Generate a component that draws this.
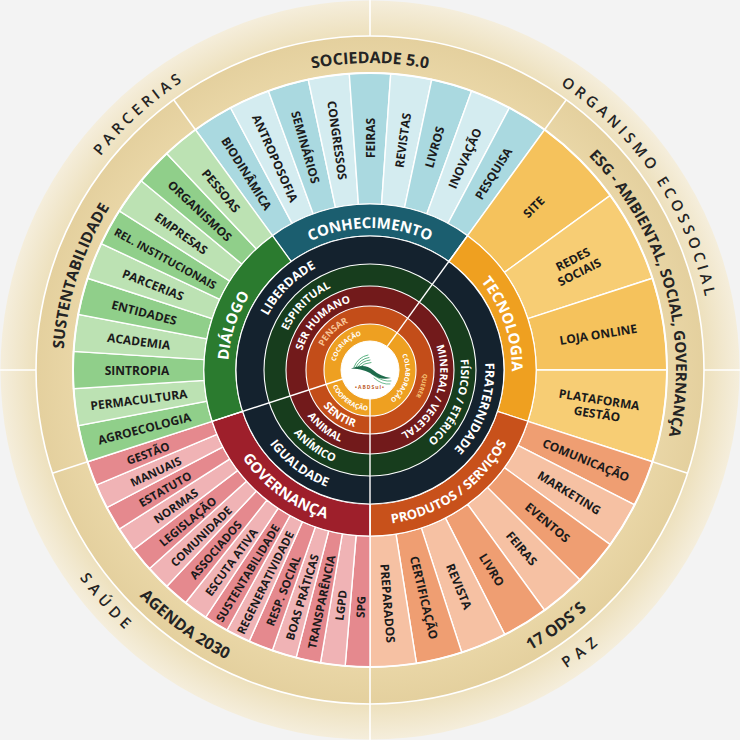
import React from "react";

const CX = 370;
const CY = 370;
const FONT = "'Open Sans', 'Liberation Sans', sans-serif";
const rad = (d: number) => (d * Math.PI) / 180;
const pt = (r: number, a: number): [number, number] => [CX + r * Math.cos(rad(a)), CY + r * Math.sin(rad(a))];
const f = (n: number) => n.toFixed(2);

function sector(r1: number, r2: number, a1: number, a2: number) {
  const large = a2 - a1 > 180 ? 1 : 0;
  const [x1, y1] = pt(r2, a1);
  const [x2, y2] = pt(r2, a2);
  const [x3, y3] = pt(r1, a2);
  const [x4, y4] = pt(r1, a1);
  return `M ${f(x1)} ${f(y1)} A ${r2} ${r2} 0 ${large} 1 ${f(x2)} ${f(y2)} L ${f(x3)} ${f(y3)} A ${r1} ${r1} 0 ${large} 0 ${f(x4)} ${f(y4)} Z`;
}

function arcPath(r: number, center: number, cw: boolean, half = 85) {
  const a1 = center - half;
  const a2 = center + half;
  if (cw) {
    const [x1, y1] = pt(r, a1);
    const [x2, y2] = pt(r, a2);
    return `M ${f(x1)} ${f(y1)} A ${r} ${r} 0 0 1 ${f(x2)} ${f(y2)}`;
  }
  const [x1, y1] = pt(r, a2);
  const [x2, y2] = pt(r, a1);
  return `M ${f(x1)} ${f(y1)} A ${r} ${r} 0 0 0 ${f(x2)} ${f(y2)}`;
}

type ArcProps = {
  id: string;
  r: number;
  center: number;
  cw: boolean;
  text: string;
  size: number;
  fill?: string;
  ls?: number;
  weight?: number;
  half?: number;
};

function ArcText({ id, r, center, cw, text, size, fill = "#ffffff", ls = 0, weight = 700, half = 85 }: ArcProps) {
  return (
    <g>
      <path id={id} d={arcPath(r, center, cw, half)} fill="none" />
      <text fontSize={size} fill={fill} fontWeight={weight} letterSpacing={ls} fontFamily={FONT}>
        <textPath href={`#${id}`} startOffset="50%" textAnchor="middle">
          {text}
        </textPath>
      </text>
    </g>
  );
}

function SegLabel({ r, a, label, size }: { r: number; a: number; label: string | string[]; size: number }) {
  let n = ((a % 360) + 360) % 360;
  if (n > 180) n -= 360;
  const rot = n >= -90 && n <= 90 ? n : n + 180;
  const [x, y] = pt(r, a);
  const lines = Array.isArray(label) ? label : [label];
  const lh = size * 1.2;
  return (
    <text
      transform={`translate(${f(x)} ${f(y)}) rotate(${f(rot)})`}
      fontSize={size}
      fontWeight={700}
      fill="#1b1b1b"
      textAnchor="middle"
      dominantBaseline="central"
      fontFamily={FONT}
    >
      {lines.map((l, i) => (
        <tspan key={i} x={0} y={f((i - (lines.length - 1) / 2) * lh)}>
          {l}
        </tspan>
      ))}
    </text>
  );
}

type Seg = { t: string | string[]; s?: number };
type Group = { start: number; end: number; colors: [string, string]; tr: number; size: number; segs: Seg[] };

const groups: Group[] = [
  {
    start: 234,
    end: 306,
    colors: ["#aad9e0", "#d4ecf0"],
    tr: 232,
    size: 12,
    segs: [
      { t: "BIODINÂMICA" },
      { t: "ANTROPOSOFIA" },
      { t: "SEMINÁRIOS" },
      { t: "CONGRESSOS" },
      { t: "FEIRAS" },
      { t: "REVISTAS" },
      { t: "LIVROS" },
      { t: "INOVAÇÃO" },
      { t: "PESQUISA" },
    ],
  },
  {
    start: 306,
    end: 378,
    colors: ["#f5c25c", "#f7cd74"],
    tr: 231,
    size: 12,
    segs: [{ t: "SITE" }, { t: ["REDES", "SOCIAIS"] }, { t: "LOJA ONLINE" }, { t: ["PLATAFORMA", "GESTÃO"] }],
  },
  {
    start: 18,
    end: 90,
    colors: ["#ef9e72", "#f6c1a3"],
    tr: 234,
    size: 12,
    segs: [
      { t: "COMUNICAÇÃO" },
      { t: "MARKETING" },
      { t: "EVENTOS" },
      { t: "FEIRAS" },
      { t: "LIVRO" },
      { t: "REVISTA" },
      { t: "CERTIFICAÇÃO" },
      { t: "PREPARADOS" },
    ],
  },
  {
    start: 90,
    end: 162,
    colors: ["#e5898e", "#f0b3b5"],
    tr: 237,
    size: 11.5,
    segs: [
      { t: "SPG" },
      { t: "LGPD" },
      { t: "TRANSPARÊNCIA" },
      { t: "BOAS PRÁTICAS" },
      { t: "RESP. SOCIAL" },
      { t: "REGENERATIVIDADE" },
      { t: "SUSTENTABILIDADE" },
      { t: "ESCUTA ATIVA" },
      { t: "ASSOCIADOS" },
      { t: "COMUNIDADE" },
      { t: "LEGISLAÇÃO" },
      { t: "NORMAS" },
      { t: "ESTATUTO" },
      { t: "MANUAIS" },
      { t: "GESTÃO" },
    ],
  },
  {
    start: 162,
    end: 234,
    colors: ["#90cf8a", "#bce2b3"],
    tr: 233,
    size: 12,
    segs: [
      { t: "AGROECOLOGIA" },
      { t: "PERMACULTURA" },
      { t: "SINTROPIA" },
      { t: "ACADEMIA" },
      { t: "ENTIDADES" },
      { t: "PARCERIAS" },
      { t: "REL. INSTITUCIONAIS", s: 11 },
      { t: "EMPRESAS" },
      { t: "ORGANISMOS" },
      { t: "PESSOAS" },
    ],
  },
];

const categories = [
  { start: 234, end: 306, color: "#1b5e6f" },
  { start: 306, end: 378, color: "#efa020" },
  { start: 18, end: 90, color: "#c8511b" },
  { start: 90, end: 162, color: "#9e1f2b" },
  { start: 162, end: 234, color: "#2b7b2f" },
];

const rings = [
  { r: 134, c: "#14222e" },
  { r: 106, c: "#173d1d" },
  { r: 84, c: "#721a1b" },
  { r: 64, c: "#c34d19" },
  { r: 46, c: "#eea021" },
];

export default function App() {
  let idc = 0;
  const nid = () => `tp${idc++}`;

  const segPaths: React.ReactNode[] = [];
  const segLabels: React.ReactNode[] = [];
  groups.forEach((g, gi) => {
    const step = (g.end - g.start) / g.segs.length;
    g.segs.forEach((s, i) => {
      const a1 = g.start + i * step;
      const a2 = a1 + step;
      segPaths.push(
        <path key={`s${gi}-${i}`} d={sector(166, 297, a1, a2)} fill={g.colors[i % 2]} stroke="#ffffff" strokeWidth={1.4} />
      );
      segLabels.push(<SegLabel key={`l${gi}-${i}`} r={g.tr} a={(a1 + a2) / 2} label={s.t} size={s.s ?? g.size} />);
    });
  });

  const dark = "#242424";

  return (
    <div className="w-[740px] h-[740px] bg-[#f3f3f3] overflow-hidden">
      <svg width={740} height={740} viewBox="0 0 740 740" className="block">
        <defs>
          <radialGradient id="outerGrad" gradientUnits="userSpaceOnUse" cx={370} cy={370} r={370}>
            <stop offset="0.9" stopColor="#ede0bc" />
            <stop offset="1" stopColor="#f5eedc" />
          </radialGradient>
          <radialGradient id="midGrad" gradientUnits="userSpaceOnUse" cx={370} cy={370} r={334}>
            <stop offset="0.89" stopColor="#e9d6a6" />
            <stop offset="1" stopColor="#e4d09e" />
          </radialGradient>
        </defs>

        <circle cx={CX} cy={CY} r={369.5} fill="url(#outerGrad)" />
        <circle cx={CX} cy={CY} r={334} fill="url(#midGrad)" stroke="#ffffff" strokeWidth={1.6} />

        {[0, 90, 180, 270].map((a) => {
          const [x1, y1] = pt(334, a);
          const [x2, y2] = pt(370, a);
          return <line key={`od${a}`} x1={x1} y1={y1} x2={x2} y2={y2} stroke="#ffffff" strokeWidth={1.6} />;
        })}
        {[18, 90, 162, 234, 306].map((a) => {
          const [x1, y1] = pt(297, a);
          const [x2, y2] = pt(334, a);
          return <line key={`md${a}`} x1={x1} y1={y1} x2={x2} y2={y2} stroke="#ffffff" strokeWidth={1.6} />;
        })}

        {segPaths}
        <circle cx={CX} cy={CY} r={297} fill="none" stroke="#ffffff" strokeWidth={2} />

        {categories.map((c, i) => (
          <path key={`c${i}`} d={sector(134, 166, c.start, c.end)} fill={c.color} stroke="#ffffff" strokeWidth={1.2} />
        ))}

        {rings.map((r, i) => (
          <circle key={`r${i}`} cx={CX} cy={CY} r={r.r} fill={r.c} stroke="#ffffff" strokeWidth={1.1} />
        ))}
        <circle cx={CX} cy={CY} r={29} fill="#ffffff" stroke="#ffffff" strokeWidth={1} />

        {[306, 90, 162].map((a) => {
          const [x1, y1] = pt(29, a);
          const [x2, y2] = pt(166, a);
          return <line key={`id${a}`} x1={x1} y1={y1} x2={x2} y2={y2} stroke="#ffffff" strokeWidth={1.4} />;
        })}

        {/* Logo */}
        <g transform="translate(370 370)">
          <g fill="none" stroke="#47a874" strokeWidth={0.9} strokeLinecap="round">
            <path d="M -16 -3 Q -12 -13 -2 -15" />
            <path d="M -14 -3 Q -10 -11 -1 -12.5" />
            <path d="M -12 -3 Q -8 -9 0 -10" />
            <path d="M -10 -3 Q -6 -7 1 -7.5" />
          </g>
          <path
            d="M -19 -1.5 C -10 -5 -3 -5 3 0 C 8 4.5 14 7 21 8 C 14 9.5 7 8.5 2 4.5 C -3 0.5 -10 -1 -19 -1.5 Z"
            fill="#1e6b4b"
          />
          <g fill="none" stroke="#47a874" strokeWidth={0.8} strokeLinecap="round">
            <path d="M 5 6 Q 13 12 21 11" />
            <path d="M 4 8 Q 12 15 20 14" />
          </g>
          <text y={19} fontSize={5} fill="#c0622e" textAnchor="middle" letterSpacing={1} fontWeight={700} fontFamily={FONT}>
            •ABDSul•
          </text>
        </g>

        {segLabels}

        {/* Category ring labels */}
        <ArcText id={nid()} r={142} center={270} cw text="CONHECIMENTO" size={15} />
        <ArcText id={nid()} r={142} center={341} cw text="TECNOLOGIA" size={15} />
        <ArcText id={nid()} r={155} center={55} cw={false} text="PRODUTOS / SERVIÇOS" size={13} />
        <ArcText id={nid()} r={155} center={126} cw={false} text="GOVERNANÇA" size={15} />
        <ArcText id={nid()} r={142} center={198} cw text="DIÁLOGO" size={15} />

        {/* Inner rings labels */}
        <ArcText id={nid()} r={115.5} center={225} cw text="LIBERDADE" size={12.5} half={40} />
        <ArcText id={nid()} r={91} center={225} cw text="ESPIRITUAL" size={11} half={45} />
        <ArcText id={nid()} r={70.3} center={225} cw text="SER HUMANO" size={10.5} half={50} />
        <ArcText id={nid()} r={52} center={226} cw text="PENSAR" size={9} fill="#f8c596" half={50} />
        <ArcText id={nid()} r={35.5} center={225} cw text="COCRIAÇÃO" size={6.5} half={55} />

        <ArcText id={nid()} r={115.5} center={20} cw text="FRATERNIDADE" size={12.5} half={50} />
        <ArcText id={nid()} r={91} center={22} cw text="FÍSICO / ETÉRICO" size={11} half={55} />
        <ArcText id={nid()} r={70.3} center={22} cw text="MINERAL / VEGETAL" size={10.5} half={60} />
        <ArcText id={nid()} r={53} center={17} cw text="QUERER" size={6} fill="#f7c77a" half={40} />
        <ArcText id={nid()} r={35.5} center={15} cw text="COLABORAÇÃO" size={6.5} half={60} />

        <ArcText id={nid()} r={124.5} center={127} cw={false} text="IGUALDADE" size={12.5} half={40} />
        <ArcText id={nid()} r={99} center={126} cw={false} text="ANÍMICO" size={11} half={40} />
        <ArcText id={nid()} r={77.7} center={128} cw={false} text="ANIMAL" size={10.5} half={40} />
        <ArcText id={nid()} r={59} center={124} cw={false} text="SENTIR" size={11} half={45} />
        <ArcText id={nid()} r={40.5} center={125} cw={false} text="COOPERAÇÃO" size={6.5} half={55} />

        {/* Middle beige ring */}
        <ArcText id={nid()} r={307} center={270} cw text="SOCIEDADE 5.0" size={16} fill={dark} half={30} />
        <ArcText id={nid()} r={307} center={198} cw text="SUSTENTABILIDADE" size={15.5} fill={dark} half={30} />
        <ArcText id={nid()} r={306} center={344} cw text="ESG - AMBIENTAL, SOCIAL, GOVERNANÇA" size={15} fill={dark} half={40} />
        <ArcText id={nid()} r={323} center={126} cw={false} text="AGENDA 2030" size={16} fill={dark} half={30} />
        <ArcText id={nid()} r={323} center={54} cw={false} text="17 ODS´S" size={16} fill={dark} half={30} />

        {/* Outer light ring */}
        <ArcText id={nid()} r={344} center={228} cw text="PARCERIAS" size={15} ls={4} weight={600} fill={dark} half={25} />
        <ArcText id={nid()} r={343} center={326} cw text="ORGANISMO ECOSSOCIAL" size={15} ls={4} weight={600} fill={dark} half={35} />
        <ArcText id={nid()} r={357} center={138.5} cw={false} text="SAÚDE" size={15} ls={5} weight={600} fill={dark} half={20} />
        <ArcText id={nid()} r={357} center={53} cw={false} text="PAZ" size={15} ls={6} weight={600} fill={dark} half={20} />
      </svg>
    </div>
  );
}
